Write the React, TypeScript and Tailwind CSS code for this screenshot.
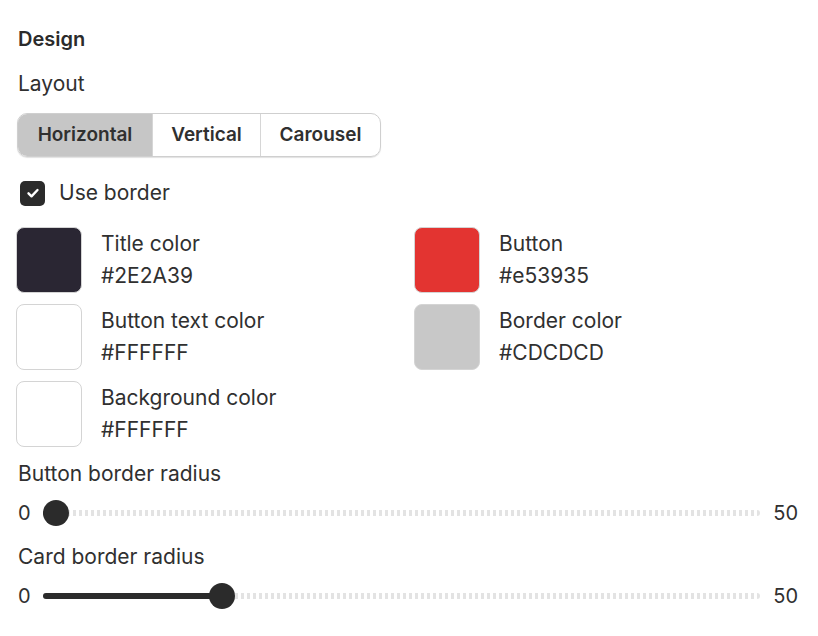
import React from "react";

const swatches = [
  { label: "Title color", hex: "#2E2A39", color: "#2a2633" },
  { label: "Button", hex: "#e53935", color: "#e33431" },
  { label: "Button text color", hex: "#FFFFFF", color: "#ffffff" },
  { label: "Border color", hex: "#CDCDCD", color: "#c8c8c8" },
  { label: "Background color", hex: "#FFFFFF", color: "#ffffff" },
];

function Slider({ value, max }: { value: number; max: number }) {
  const pct = value / max;
  const thumb = 26;
  return (
    <div className="flex items-center h-[26px]">
      <span className="w-[13px] text-[20px] leading-6 ml-[2px]">0</span>
      <div className="relative flex-1 h-[26px] ml-[12px] mr-[13px]">
        <div className="absolute left-0 right-0 top-[10px] h-[6px] rounded-full bg-[repeating-linear-gradient(90deg,#e3e3e3_0_3px,transparent_3px_6px)]" />
        <div
          className="absolute left-0 top-[10px] h-[6px] rounded-full bg-[#2b2b2b]"
          style={{ width: `calc(${pct} * (100% - ${thumb}px) + ${thumb / 2}px)` }}
        />
        <div
          className="absolute top-0 w-[26px] h-[26px] rounded-full bg-[#2b2b2b]"
          style={{ left: `calc(${pct} * (100% - ${thumb}px))` }}
        />
      </div>
      <span className="text-[20px] leading-6">{max}</span>
    </div>
  );
}

export default function App() {
  return (
    <div
      className="w-[818px] h-[636px] bg-white text-[#303030] pl-4 pr-5 pt-[27px] flex flex-col"
      style={{ fontFamily: "Inter, 'Noto Sans', sans-serif" }}
    >
      <div className="text-[20px] leading-6 font-semibold text-[#2b2b2b] ml-[2px]">Design</div>
      <div className="text-[21px] leading-6 mt-[21px] ml-[2px]">Layout</div>
      <div className="mt-[17px] flex w-[364px] h-[44px] rounded-[10px] border border-[#cfcfcf] shadow-[0_1px_1px_rgba(0,0,0,0.12)] overflow-hidden ml-[1px]">
        <div className="w-[134px] flex items-center justify-center bg-[#c6c6c6] text-[19px] font-semibold">
          Horizontal
        </div>
        <div className="w-[108px] flex items-center justify-center border-l border-[#d6d6d6] text-[19px] font-semibold">
          Vertical
        </div>
        <div className="flex-1 flex items-center justify-center border-l border-[#d6d6d6] text-[19px] font-semibold">
          Carousel
        </div>
      </div>
      <div className="mt-[23px] flex items-center h-[26px] ml-[4px]">
        <div className="w-[25px] h-[25px] rounded-[5px] bg-[#2b2b2b] flex items-center justify-center">
          <svg width="16" height="16" viewBox="0 0 16 16" fill="none">
            <path d="M3.5 8.3l3 3L12.5 5" stroke="white" strokeWidth="2.4" strokeLinecap="round" strokeLinejoin="round" />
          </svg>
        </div>
        <span className="ml-[14px] text-[21px] leading-6">Use border</span>
      </div>
      <div className="mt-[21px] grid grid-cols-2 gap-x-[14px] gap-y-[11px]">
        {swatches.map((s) => (
          <div key={s.label} className="flex">
            <div
              className="w-[66px] h-[66px] rounded-[8px] border border-[#d4d4d4] shrink-0"
              style={{ backgroundColor: s.color }}
            />
            <div className="ml-[19px] pt-[5px] flex flex-col gap-[8px]">
              <span className="text-[21px] leading-6">{s.label}</span>
              <span className="text-[21px] leading-6">{s.hex}</span>
            </div>
          </div>
        ))}
      </div>
      <div className="mt-[15px] text-[21px] leading-6 ml-[2px]">Button border radius</div>
      <div className="mt-[14px]">
        <Slider value={0} max={50} />
      </div>
      <div className="mt-[19px] text-[21px] leading-6 ml-[2px]">Card border radius</div>
      <div className="mt-[14px]">
        <Slider value={12} max={50} />
      </div>
    </div>
  );
}
